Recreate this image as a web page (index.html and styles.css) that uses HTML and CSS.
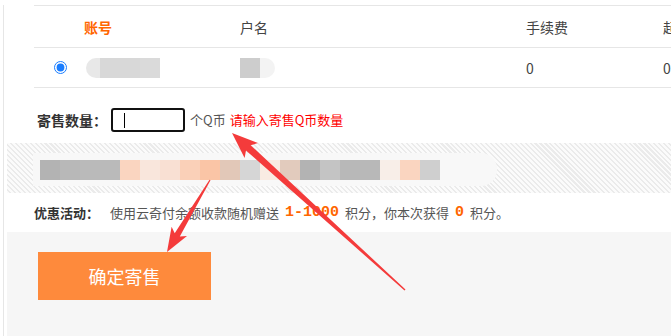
FILE: index.html
```html
<!DOCTYPE html>
<html lang="zh-CN">
<head>
    <meta charset="UTF-8">
    <meta name="viewport" content="width=device-width, initial-scale=1.0">
    <title>寄售Q币</title>
    <link rel="stylesheet" href="styles.css">
</head>
<body>
    <div class="page">
        <div class="account-table">
            <div class="row head">
                <span></span>
                <span class="col-account">账号</span>
                <span>户名</span>
                <span>手续费</span>
                <span>起</span>
            </div>
            <div class="row">
                <span class="col-radio"><input type="radio" name="account" checked></span>
                <span class="col-blur"><i class="blur-name"></i></span>
                <span></span>
                <span>0</span>
                <span>0</span>
            </div>
        </div>

        <div class="qty-row">
            <span class="qty-label">寄售数量：</span>
            <span class="qty-input"><i class="caret"></i></span>
            <span class="qty-unit">个Q币</span>
            <span class="qty-tip">请输入寄售Q币数量</span>
        </div>

        <div class="notice-band">
            <div class="notice-pill">
                <div class="mosaic"></div>
            </div>
        </div>

        <div class="promo">
            <b>优惠活动：</b>
            <span>使用云奇付余额收款随机赠送</span>
            <em>1-1000</em>
            <span>积分，你本次获得</span>
            <em>0</em>
            <span>积分。</span>
        </div>

        <div class="submit-area">
            <button class="btn-submit">确定寄售</button>
        </div>

        <!-- 标注箭头 -->
        <svg class="marks" width="671" height="336" viewBox="0 0 671 336">
            <polygon points="232,128 258,138.1 250.6,140.2 405.5,284.5 404.5,285.5 246,145.4 244.6,152.9" />
            <polygon points="167,247 187,231 179.8,231.4 210.5,175.3 209.5,174.7 174.7,228.3 171.6,221.8" />
        </svg>
    </div>
</body>
</html>
```

FILE: styles.css
```css
body {
    margin: 0;
    font-family: "Noto Sans CJK SC", "Noto Sans", sans-serif;
    font-size: 14px;
    color: #444;
    background-color: #fff;
    overflow: hidden;
}

.page {
    position: relative;
    margin-left: 3px;
    padding-left: 3px;
    border-left: 1px solid #e6e6e6;
    height: 336px;
}

/* 账号表格 */
.account-table {
    margin: 5px 0 0 27px;
    border-top: 1px solid #e6e6e6;
}

.row {
    display: grid;
    grid-template-columns: 50px 156px 286px 137px 1fr;
    align-items: center;
    height: 39px;
    border-bottom: 1px solid #e6e6e6;
    line-height: 20px;
    white-space: nowrap;
}

.row.head {
    height: 41px;
}

.col-account {
    color: #ff6600;
    font-weight: bold;
}

.col-radio {
    display: flex;
    padding-left: 20px;
}

.col-radio input {
    margin: 0;
    width: 13px;
    height: 13px;
    accent-color: #1a7dff;
}

.blur-name {
    display: block;
    margin-left: 2px;
    width: 189px;
    height: 20px;
    border-radius: 10px;
    background: linear-gradient(to right,
        #e8e8e8 0 14px, #d8d8d8 14px 54px, #dadada 54px 74px,
        #fff 74px 154px, #cdcdcd 154px 174px, #f3f3f3 174px);
}

/* 数量 */
.qty-row {
    display: flex;
    align-items: center;
    margin: 20px 0 0 30px;
    height: 24px;
    font-size: 13px;
    line-height: 18px;
}

.qty-label {
    width: 74px;
    font-size: 14px;
    font-weight: bold;
    color: #333;
}

.qty-input {
    display: flex;
    align-items: center;
    box-sizing: border-box;
    width: 74px;
    height: 24px;
    margin-right: 5px;
    padding-left: 11px;
    border: 2px solid #111;
    border-radius: 3px;
}

.caret {
    display: block;
    width: 1px;
    height: 15px;
    background-color: #000;
}

.qty-unit {
    color: #555;
    margin-right: 4px;
}

.qty-tip {
    color: #ff0000;
}

/* 公告条 */
.notice-band {
    margin-top: 11px;
    height: 50px;
    padding-top: 10px;
    box-sizing: border-box;
    background: repeating-linear-gradient(45deg, #fbfbfb 0 2px, #ebebeb 2px 3.5px);
}

.notice-pill {
    margin-left: 26px;
    width: 464px;
    height: 33px;
    padding: 7px 0 0 7px;
    box-sizing: border-box;
    background-color: #f8f8f8;
    border-radius: 0 16px 16px 0;
}

.mosaic {
    width: 400px;
    height: 20px;
    background: linear-gradient(to right,
        #b3b3b3 0 20px, #b8b8b8 20px 40px, #bababa 40px 80px,
        #fad5c0 80px 100px, #f9e6dc 100px 120px, #f9e0d3 120px 140px,
        #fad0b8 140px 160px, #fac5a6 160px 180px, #e2c8b8 180px 200px,
        #d6d6d6 200px 220px, #f9ebe2 220px 240px, #e2cbbd 240px 260px,
        #b3b3b3 260px 280px, #c4c4c4 280px 300px, #b8b8b8 300px 340px,
        #f8eee8 340px 360px, #fad5c0 360px 380px, #cfcfcf 380px 400px);
}

/* 优惠活动 */
.promo {
    display: flex;
    align-items: center;
    height: 39px;
    padding-left: 27px;
    font-size: 13px;
    color: #555;
    white-space: nowrap;
}

.promo b {
    color: #333;
    margin-right: 11px;
}

.promo em {
    font-style: normal;
    font-weight: bold;
    font-family: "Liberation Mono", monospace;
    font-size: 15px;
    color: #ff6600;
    margin: 0 6px;
}

/* 提交 */
.submit-area {
    height: 104px;
    padding: 20px 0 0 31px;
    box-sizing: border-box;
    background-color: #f6f6f6;
}

.btn-submit {
    width: 173px;
    height: 48px;
    border: none;
    background-color: #fe8a3c;
    color: #fff;
    font-family: inherit;
    font-size: 18px;
    cursor: pointer;
}

.marks {
    position: absolute;
    left: -4px;
    top: 0;
    pointer-events: none;
}

.marks polygon {
    fill: #f43b3b;
}
```
